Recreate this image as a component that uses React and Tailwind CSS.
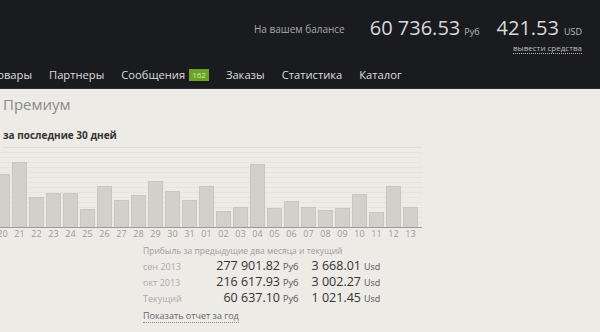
import React from 'react';

const bars = [
   { d: '20', h: 53 },
   { d: '21', h: 65 },
   { d: '22', h: 30 },
   { d: '23', h: 34 },
   { d: '24', h: 34 },
   { d: '25', h: 18 },
   { d: '26', h: 41 },
   { d: '27', h: 27 },
   { d: '28', h: 32 },
   { d: '29', h: 46 },
   { d: '30', h: 36 },
   { d: '31', h: 27 },
   { d: '01', h: 41 },
   { d: '02', h: 16 },
   { d: '03', h: 20 },
   { d: '04', h: 63 },
   { d: '05', h: 19 },
   { d: '06', h: 26 },
   { d: '07', h: 20 },
   { d: '08', h: 17 },
   { d: '09', h: 19 },
   { d: '10', h: 33 },
   { d: '11', h: 15 },
   { d: '12', h: 41 },
   { d: '13', h: 20 },
];

const nav = ['Товары', 'Партнеры', 'Сообщения', 'Заказы', 'Статистика', 'Каталог'];

const rows = [
   { label: 'сен 2013', rub: '277 901.82', usd: '3 668.01' },
   { label: 'окт 2013', rub: '216 617.93', usd: '3 002.27' },
   { label: 'Текущий', rub: '60 637.10', usd: '1 021.45' },
];

export default function App() {
   return (
      <div className="w-[600px] h-[332px] overflow-hidden bg-[#edebe6] font-['Open_Sans',sans-serif] whitespace-nowrap">
         <header className="bg-[#1a1b1f] h-[89px] border-b border-[#2a2b2e]">
            <div className="h-[61px] flex justify-end items-start pr-[18px] pt-[14px]">
               <span className="text-[10px] leading-[14px] text-[#a9a9a9] mt-[8px] mr-[25px]">На вашем балансе</span>
               <div className="flex items-baseline mr-[17px]">
                  <span className="text-[20px] leading-[28px] text-[#d9d9d9]">60 736.53</span>
                  <span className="text-[9px] text-[#bdbdbd] ml-[4px]">Руб</span>
               </div>
               <div className="flex flex-col items-end">
                  <div className="flex items-baseline">
                     <span className="text-[20px] leading-[28px] text-[#d9d9d9]">421.53</span>
                     <span className="text-[9px] text-[#bdbdbd] ml-[5px]">USD</span>
                  </div>
                  <a className="text-[8px] leading-[11px] text-[#bcbcbc] border-b border-dotted border-[#bcbcbc]">
                     вывести средства
                  </a>
               </div>
            </div>
            <ul className="flex items-center h-[29px] ml-[-9px] gap-[17px] text-[11.2px] text-[#dedede]">
               {nav.map((item, index) => (
                  <li key={index} className="flex items-center">
                     {item}
                     {item === 'Сообщения' && (
                        <span className="ml-[4px] bg-[#6ba422] text-[#d8ecb8] text-[8px] leading-[12px] px-[3px]">162</span>
                     )}
                  </li>
               ))}
            </ul>
         </header>
         <main className="pl-[3px]">
            <h1 className="text-[15px] text-[#8a8a8a] mt-[3px] leading-[24px]">Премиум</h1>
            <div className="w-[419px] mt-[11px] border-b border-[#dcdad5] pb-[4px]">
               <h2 className="text-[10px] font-bold text-[#333] leading-[16px]">за последние 30 дней</h2>
            </div>
         </main>
         <div className="w-[422px] h-[80px] flex items-end border-b border-[#9b9b9b] bg-[repeating-linear-gradient(to_bottom,#edebe6_0px,#edebe6_4px,#e6e4df_4px,#e6e4df_5px)]">
            <div className="flex items-end gap-[2px] ml-[-5px]">
               {bars.map((bar) => (
                  <div key={bar.d} className="w-[15px] bg-[#d3d0cb] border border-[#c9c6c1] border-b-0" style={{ height: bar.h }} />
               ))}
            </div>
         </div>
         <div className="flex gap-[2px] ml-[-5px]">
            {bars.map((bar) => (
               <span key={bar.d} className="w-[15px] text-center text-[9px] leading-[12px] text-[#9a9a9a]">{bar.d}</span>
            ))}
         </div>
         <section className="ml-[143px] mt-[5px]">
            <p className="text-[8.5px] leading-[12px] text-[#9e9e9e]">Прибыль за предыдущие два месяца и текущий</p>
            <div>
               {rows.map((row) => (
                  <div key={row.label} className="flex items-baseline h-[16px]">
                     <span className="w-[64px] text-[9px] text-[#ababab]">{row.label}</span>
                     <span className="w-[73px] text-right text-[12.5px] font-medium text-[#333]">{row.rub}</span>
                     <span className="w-[29px] pl-[3px] text-[9px] text-[#555]">Руб</span>
                     <span className="w-[52px] text-right text-[12.5px] font-medium text-[#333]">{row.usd}</span>
                     <span className="pl-[3px] text-[9px] text-[#555]">Usd</span>
                  </div>
               ))}
            </div>
            <a className="block w-fit mt-[5px] text-[9px] leading-[12px] text-[#666] border-b border-dotted border-[#888]">
               Показать отчет за год
            </a>
         </section>
      </div>
   );
}
